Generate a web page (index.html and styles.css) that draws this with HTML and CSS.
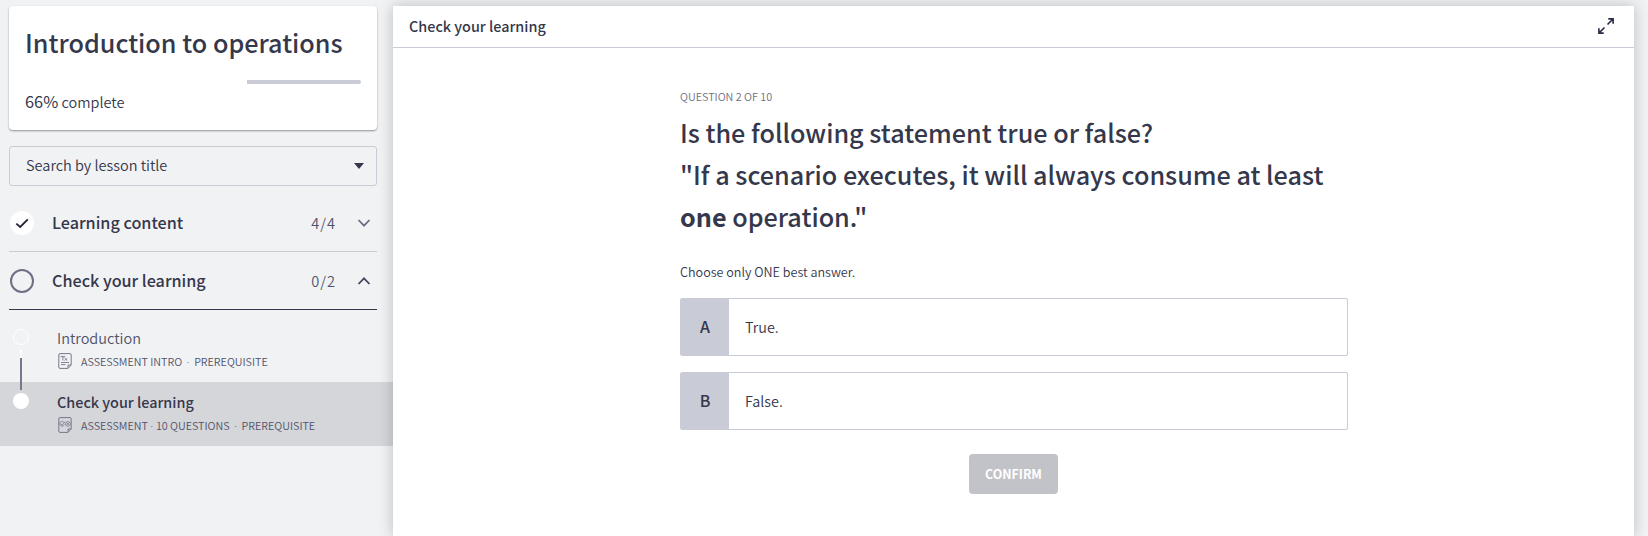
FILE: index.html
```html
<!DOCTYPE html>
<html lang="en">
<head>
<meta charset="utf-8">
<title>Introduction to operations</title>
<link rel="stylesheet" href="styles.css">
</head>
<body>
<div class="app">
  <aside class="sidebar">
    <section class="course-card">
      <h1 class="course-title"><span>Introduction to operations</span></h1>
      <div class="progress"><div class="progress-rest"></div></div>
      <p class="progress-label"><span class="percent">66%</span> <span class="complete">complete</span></p>
    </section>
    <div class="search">
      <span class="search-text">Search by lesson title</span>
      <svg class="caret" width="10" height="6" viewBox="0 0 10 6"><path d="M0 0H10L5 6Z" fill="#35374b"/></svg>
    </div>
    <div class="section">
      <svg width="24" height="24" viewBox="0 0 24 24"><circle cx="12" cy="12" r="12" fill="#fff"/><path d="M6.3 12.6L10.2 16L17.8 8.4" fill="none" stroke="#222333" stroke-width="1.8"/></svg>
      <span class="section-name"><span>Learning content</span></span>
      <span class="count"><span>4/4</span></span>
      <svg class="chevron" width="14" height="8" viewBox="0 0 14 8"><path d="M1.5 1L7 6.7L12.5 1" fill="none" stroke="#6c6c80" stroke-width="1.8"/></svg>
    </div>
    <div class="section open">
      <svg width="24" height="24" viewBox="0 0 24 24"><circle cx="12" cy="12" r="11" fill="none" stroke="#6e6e85" stroke-width="2"/></svg>
      <span class="section-name"><span>Check your learning</span></span>
      <span class="count"><span>0/2</span></span>
      <svg class="chevron" width="14" height="8" viewBox="0 0 14 8"><path d="M1.5 7L7 1.3L12.5 7" fill="none" stroke="#45455c" stroke-width="1.8"/></svg>
    </div>
    <div class="lessons">
      <div class="lesson">
        <svg class="step" width="16" height="16" viewBox="0 0 16 16"><circle cx="8" cy="8" r="7.5" fill="none" stroke="#fff"/></svg>
        <div class="lesson-body">
          <div class="lesson-name"><span>Introduction</span></div>
          <div class="lesson-meta">
            <svg width="14" height="16" viewBox="0 0 14 16" fill="none" stroke="#77778c"><path d="M2 .6H12Q13.2 .6 13.2 2V12L10 15.4H2Q.8 15.4 .8 14V2Q.8 .6 2 .6ZM13 12H10V15.2"/><path d="M2.5 3.6H7.3M4.9 3.6V7.5M6.6 5.2L9.2 7.5M9.2 5.2L6.6 7.5M3 9.5H11M3 11.6H7.5" stroke-width=".9"/></svg>
            <span class="meta-text">ASSESSMENT INTRO<span class="dot wide">·</span>PREREQUISITE</span>
          </div>
        </div>
      </div>
      <div class="lesson current">
        <svg class="step" width="16" height="16" viewBox="0 0 16 16"><circle cx="8" cy="8" r="8" fill="#fff"/></svg>
        <div class="lesson-body">
          <div class="lesson-name"><span>Check your learning</span></div>
          <div class="lesson-meta">
            <svg width="14" height="16" viewBox="0 0 14 16" fill="none" stroke="#77778c"><path d="M2 .6H12Q13.2 .6 13.2 2V12L10 15.4H2Q.8 15.4 .8 14V2Q.8 .6 2 .6ZM13 12H10V15.2"/><path d="M6.2 5.6A2.4 2.4 0 1 0 6.4 7.4M2.8 6.8L4.1 8L7 4.8M9.9 4.5A2.4 2.4 0 1 0 9.9 9.3A2.4 2.4 0 1 0 9.9 4.5M8.9 5.9L10.9 7.9M10.9 5.9L8.9 7.9" stroke-width=".8"/></svg>
            <span class="meta-text">ASSESSMENT<span class="dot">·</span>10 QUESTIONS<span class="dot wide">·</span>PREREQUISITE</span>
          </div>
        </div>
      </div>
      <div class="connector"></div>
    </div>
  </aside>
  <main class="panel">
    <header class="panel-head">
      <span class="panel-title">Check your learning</span>
      <svg width="16" height="16" viewBox="0 0 16 16" fill="none" stroke="#292b42" stroke-width="1.6"><path d="M10.3 .9H15.1V5.7M15 1L9.5 6.5M5.7 15.1H.9V10.3M1 15L6.5 9.5"/></svg>
    </header>
    <div class="quiz">
      <div class="question-no"><span>QUESTION 2 OF 10</span></div>
      <h2 class="question"><span class="q1">Is the following statement true or false?</span><br><span class="q2">"If a scenario executes, it will always consume at least</span><br><span class="q3"><b>one</b> operation."</span></h2>
      <p class="hint"><span>Choose only ONE best answer.</span></p>
      <div class="option"><span class="letter">A</span><span class="answer">True.</span></div>
      <div class="option"><span class="letter">B</span><span class="answer">False.</span></div>
      <button class="confirm">CONFIRM</button>
    </div>
  </main>
</div>
</body>
</html>
```
FILE: styles.css
```css
* { box-sizing: border-box; }
body {
  margin: 0;
  background: #f1f2f4;
  color: #35374b;
  font-family: "Noto Sans CJK SC", "Noto Sans", sans-serif;
  font-size: 14.4px;
}
svg { display: block; flex: none; }
h1, h2, p { margin: 0; }
.app { display: flex; height: 536px; padding-top: 6px; overflow: hidden; }
.sidebar { width: 393px; flex: none; }
.course-card {
  width: 368px;
  height: 124px;
  margin-left: 9px;
  padding: 15px 16px;
  background: #fff;
  border-radius: 4px;
  box-shadow: 0 1px 2px rgba(0, 0, 0, .4);
}
.course-title { font-size: 25.18px; font-weight: 500; line-height: 42px; white-space: nowrap; }
.progress { height: 4px; margin-top: 17px; display: flex; justify-content: flex-end; }
.progress-rest { width: 114px; background: #c9cbd6; border-radius: 0 3px 3px 0; }
.progress-label { margin-top: 5px; line-height: 25px; }
.percent { font-size: 16.4px; }
.complete { font-weight: 350; font-size: 14.5px; }
.search {
  display: flex;
  align-items: center;
  justify-content: space-between;
  width: 368px;
  height: 40px;
  margin: 16px 0 0 9px;
  padding: 0 12px 0 16px;
  border: 1px solid #c9cbd6;
  border-radius: 3px;
  font-weight: 350;
}
.search-text { padding-bottom: 3px; font-size: 14.5px; }
.section {
  display: flex;
  align-items: center;
  width: 368px;
  height: 58px;
  margin-left: 9px;
  padding-left: 1px;
  border-bottom: 1px solid #c9cad2;
}
.search + .section { margin-top: 8px; }
.section.open { border-color: #35374b; }
.section-name { flex: 1; margin-left: 18px; padding-bottom: 2px; font-size: 16.18px; font-weight: 500; line-height: 24px; }
.count { margin-right: 21px; font-weight: 350; font-size: 14.6px; letter-spacing: 1px; color: #50526a; }
.chevron { margin-right: 6px; }
.lessons { position: relative; padding-top: 8px; }
.lesson { display: flex; height: 64px; padding: 11px 0 0 13px; color: #50526a; }
.lesson-body { margin-top: -1px; margin-left: 28px; }
.lesson-name { line-height: 20px; font-weight: 350; }
.lesson:not(.current) .lesson-name { font-size: 14.5px; }
.current { background: #d5d6da; }
.current .lesson-name { color: #35374b; font-weight: 500; }
.lesson-meta { display: flex; align-items: center; gap: 9px; height: 16px; margin-top: 5px; margin-left: 1px; font-size: 10.75px; font-weight: 350; white-space: pre; }
.dot { display: inline-block; width: 8px; text-align: center; font-family: "Noto Sans", sans-serif; line-height: 1; }
.dot.wide { width: 12px; }
.connector { position: absolute; left: 20px; top: 40px; width: 2px; height: 40px; background: linear-gradient(#fff 8px, #77778c 8px); }
.panel { width: 1241px; background: #fff; box-shadow: 0 0 14px rgba(0, 0, 0, .22); z-index: 1; }
.panel-head {
  display: flex;
  align-items: center;
  justify-content: space-between;
  height: 42px;
  padding: 0 20px 2px 16px;
  border-bottom: 1px solid #c9cbd6;
  font-weight: 500;
}
.quiz { display: flex; flex-direction: column; width: 668px; margin-left: 287px; padding-top: 38px; }
.question-no { font-size: 10.8px; line-height: 20px; color: #6e7080; }
.question { margin-top: 5px; font-size: 25.18px; font-weight: 500; line-height: 42px; white-space: nowrap; }
.question b { font-weight: 700; }
.hint { margin: 25px 0 16px; font-size: 12.6px; line-height: 20px; }
.hint, .question-no, .answer { font-weight: 350; }
.option { display: flex; height: 58px; margin-bottom: 16px; border: 1px solid #c9cbd6; border-radius: 2px; }
.letter { display: flex; align-items: center; justify-content: center; width: 48px; padding-bottom: 2px; background: #c9cbd6; font-size: 16px; font-weight: 500; }
.answer { display: flex; align-items: center; margin-left: 16px; padding-bottom: 2px; }
.confirm {
  align-self: center;
  width: 89px;
  height: 40px;
  margin: 8px 1px 0 0;
  padding: 0 0 1px;
  border: 0;
  border-radius: 4px;
  background: #c2c3c9;
  color: #fff;
  font: 700 12.4px "Noto Sans CJK SC", "Noto Sans", sans-serif;
}
```
